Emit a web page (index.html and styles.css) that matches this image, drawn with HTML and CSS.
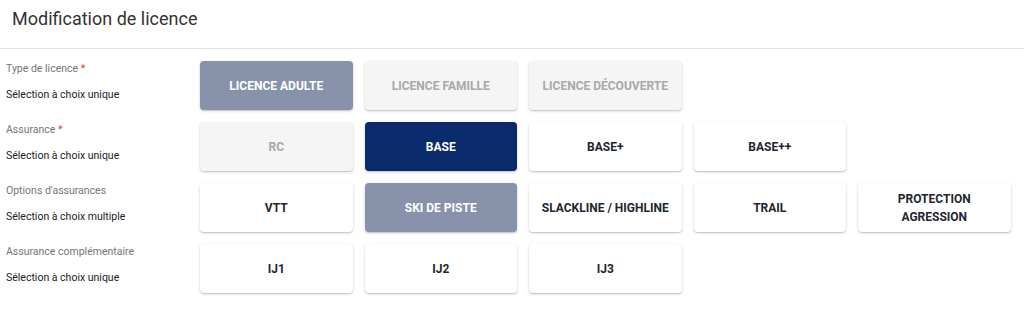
FILE: index.html
```html
<!DOCTYPE html>
<html lang="fr">
<head>
  <meta charset="UTF-8" />
  <meta name="viewport" content="width=device-width, initial-scale=1.0" />
  <title>Modification de licence</title>
  <link rel="stylesheet" href="styles.css">
</head>
<body>
  <div class="header">
    <h1>Modification de licence</h1>
  </div>

  <div class="form">
    <div class="row">
      <div class="label">
        <span class="name">Type de licence <span class="req">*</span></span>
        <span class="hint">Sélection à choix unique</span>
      </div>
      <div class="choices">
        <button class="choice picked-off">Licence adulte</button>
        <button class="choice off">Licence famille</button>
        <button class="choice off">Licence découverte</button>
      </div>
    </div>

    <div class="row">
      <div class="label">
        <span class="name">Assurance <span class="req">*</span></span>
        <span class="hint">Sélection à choix unique</span>
      </div>
      <div class="choices">
        <button class="choice off">RC</button>
        <button class="choice picked">Base</button>
        <button class="choice">Base+</button>
        <button class="choice">Base++</button>
      </div>
    </div>

    <div class="row">
      <div class="label">
        <span class="name">Options d'assurances</span>
        <span class="hint">Sélection à choix multiple</span>
      </div>
      <div class="choices">
        <button class="choice">VTT</button>
        <button class="choice picked-off">Ski de piste</button>
        <button class="choice">Slackline / Highline</button>
        <button class="choice">Trail</button>
        <button class="choice">Protection agression</button>
      </div>
    </div>

    <div class="row">
      <div class="label">
        <span class="name">Assurance complémentaire</span>
        <span class="hint">Sélection à choix unique</span>
      </div>
      <div class="choices">
        <button class="choice">IJ1</button>
        <button class="choice">IJ2</button>
        <button class="choice">IJ3</button>
      </div>
    </div>
  </div>
</body>
</html>
```
FILE: styles.css
```css
body {
  margin: 0;
  font-family: Roboto, "Liberation Sans", sans-serif;
  background-color: #ffffff;
  color: #212121;
}

.header {
  height: 48px;
  border-bottom: 1px solid #e2e2e2;
  padding: 0 12px;
}
.header h1 {
  margin: 0;
  padding-top: 7px;
  font-size: 18px;
  font-weight: 400;
  line-height: 24px;
  color: #333333;
}

.form {
  padding: 12px 0 0 6px;
}

.row {
  display: flex;
  margin-bottom: 12px;
}

.label {
  width: 194px;
  display: flex;
  flex-direction: column;
  padding-top: 1px;
}
.label .name {
  font-size: 10.5px;
  line-height: 14px;
  color: #757575;
}
.label .req {
  color: #e53935;
}
.label .hint {
  margin-top: 12px;
  font-size: 10.5px;
  line-height: 14px;
  color: #212121;
}

.choices {
  display: grid;
  grid-template-columns: repeat(5, 152.5px);
  column-gap: 12px;
}

.choice {
  height: 49px;
  padding: 0 6px;
  border: none;
  border-radius: 4px;
  background-color: #ffffff;
  color: #23262e;
  font-family: Roboto, "Liberation Sans", sans-serif;
  font-size: 12px;
  font-weight: 700;
  line-height: 18px;
  text-transform: uppercase;
  box-shadow: 0 1px 3px rgba(0, 0, 0, 0.18), 0 1px 1px rgba(0, 0, 0, 0.1);
  cursor: pointer;
}
.choice.off {
  background-color: #f5f5f5;
  color: #a8a8a8;
}
.choice.picked {
  background-color: #0b2a6c;
  color: #ffffff;
}
.choice.picked-off {
  background-color: #8893ab;
  color: #ffffff;
}
```
